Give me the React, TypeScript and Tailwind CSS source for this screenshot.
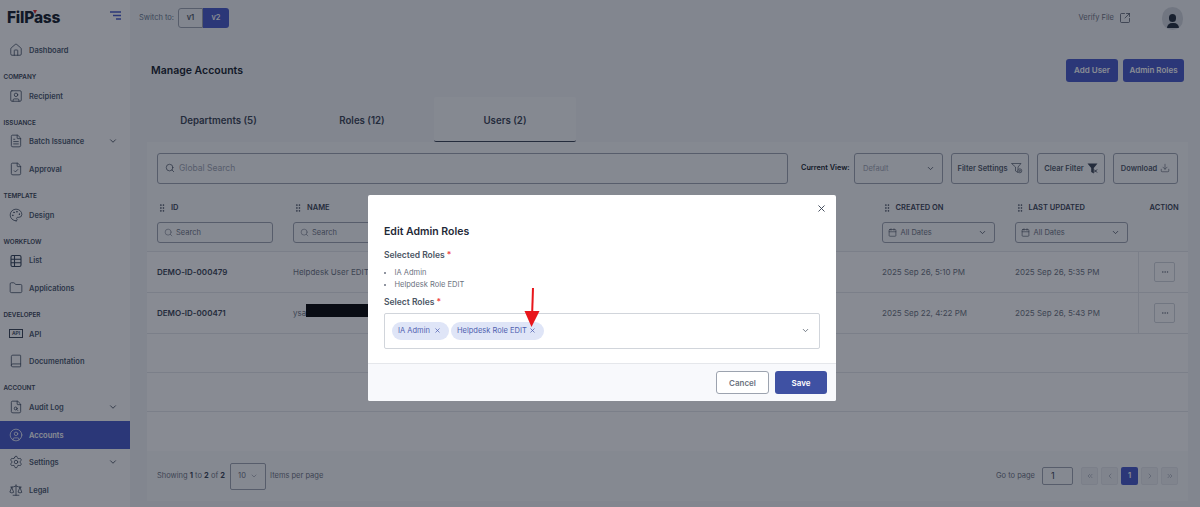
import React from "react";
import { ChevronDown, Search, X, Home, SquareUser, FileText, FileCheck, Palette, Folder, Book, FileSearch, CircleUser, Settings, Scale, SquareArrowOutUpRight, GripVertical, Calendar, Download, ChevronLeft, ChevronRight, ChevronsLeft, ChevronsRight, Ellipsis } from "lucide-react";

const font = { fontFamily: 'Inter, "Liberation Sans", sans-serif' };

function Item({ icon, label, chevron, active }: { icon: React.ReactNode; label: string; chevron?: boolean; active?: boolean }) {
  return (
    <div className={`flex h-[27.6px] shrink-0 items-center pl-[6.5px] pr-[12px] ${active ? "bg-[#4457c8] text-white" : "text-[#475569]"}`}>
      <span className={`flex w-[19px] justify-center ${active ? "text-white" : "text-[#334155]"}`}>{icon}</span>
      <span className="ml-[3.5px] flex-1 pt-[1px] text-[7.5px] font-semibold">{label}</span>
      {chevron && <ChevronDown size={10} strokeWidth={2} className="text-[#374151]" />}
    </div>
  );
}

function Section({ label }: { label: string }) {
  return <div className="flex h-[18.15px] shrink-0 items-end pb-[2px] pl-[3.5px] text-[6.3px] font-semibold leading-[6px] text-[#374151]">{label}</div>;
}

function ListIcon() {
  return (
    <svg width="14" height="14" viewBox="0 0 14 14" fill="none" stroke="currentColor" strokeWidth="1.1">
      <rect x="2" y="1.5" width="10" height="11" rx="1.5" />
      <path d="M2 5.2h10M2 8.8h10M5.5 1.5v11" />
    </svg>
  );
}

function Sidebar() {
  const s = 14;
  const w = 1.3;
  return (
    <aside className="flex h-[507px] w-[130px] shrink-0 flex-col bg-white">
      <div className="flex h-[36.2px] shrink-0 items-center justify-between pl-[7px] pr-[9px]">
        <div className="relative text-[15.5px] font-extrabold tracking-[-0.2px] text-[#111827]">
          FilPass
          <span className="absolute left-[26px] top-[4px] h-0 w-0 border-x-[2.5px] border-t-[4px] border-x-transparent border-t-[#dc2626]" />
        </div>
        <svg width="11" height="9" viewBox="0 0 11 9" className="mt-[-6px]">
          <path d="M0 1h11M3 4.5h8M6 8h5" stroke="#4457c8" strokeWidth="1.3" fill="none" />
        </svg>
      </div>
      <Item icon={<Home size={s} strokeWidth={w} />} label="Dashboard" />
      <Section label="COMPANY" />
      <Item icon={<SquareUser size={s} strokeWidth={w} />} label="Recipient" />
      <Section label="ISSUANCE" />
      <Item icon={<FileText size={s} strokeWidth={w} />} label="Batch Issuance" chevron />
      <Item icon={<FileCheck size={s} strokeWidth={w} />} label="Approval" />
      <Section label="TEMPLATE" />
      <Item icon={<Palette size={s} strokeWidth={w} />} label="Design" />
      <Section label="WORKFLOW" />
      <Item icon={<ListIcon />} label="List" />
      <Item icon={<Folder size={s} strokeWidth={w} />} label="Applications" />
      <Section label="DEVELOPER" />
      <Item icon={<span className="border border-[#374151] px-[1.5px] text-[5px] font-semibold leading-[7px]">API</span>} label="API" />
      <Item icon={<Book size={s} strokeWidth={w} />} label="Documentation" />
      <Section label="ACCOUNT" />
      <Item icon={<FileSearch size={s} strokeWidth={w} />} label="Audit Log" chevron />
      <Item icon={<CircleUser size={s} strokeWidth={w} />} label="Accounts" active />
      <Item icon={<Settings size={s} strokeWidth={w} />} label="Settings" chevron />
      <Item icon={<Scale size={s} strokeWidth={w} />} label="Legal" />
    </aside>
  );
}

function Grip() {
  return <GripVertical size={10} strokeWidth={1.6} className="text-[#374151]" />;
}

function Head({ label }: { label: string }) {
  return (
    <div className="flex h-[14px] items-center gap-[3px] text-[7.5px] font-semibold text-[#374151]">
      <Grip />
      <span className="ml-[1px]">{label}</span>
    </div>
  );
}

function SearchBox() {
  return (
    <div className="flex h-[21px] w-[116px] items-center gap-[3px] rounded-[3px] border border-[#9ca3af] pl-[6px] text-[7.5px] text-[#6b7280]">
      <Search size={9} strokeWidth={1.5} />
      Search
    </div>
  );
}

function DateBox() {
  return (
    <div className="flex h-[21px] w-[113px] items-center rounded-[3px] border border-[#9ca3af] pl-[5px] pr-[7px] text-[7.5px] text-[#6b7280]">
      <Calendar size={9} strokeWidth={1.5} className="mr-[4px] text-[#374151]" />
      <span className="flex-1">All Dates</span>
      <ChevronDown size={9} strokeWidth={2} className="text-[#374151]" />
    </div>
  );
}

function ToolButton({ label, icon, w }: { label: string; icon: React.ReactNode; w: string }) {
  return (
    <div className={`flex h-[31px] shrink-0 items-center justify-center gap-[3px] whitespace-nowrap rounded-[3px] border border-[#9ca3af] text-[7.5px] font-semibold text-[#4b5563] ${w}`}>
      {label}
      {icon}
    </div>
  );
}

function PageBtn({ children, active }: { children: React.ReactNode; active?: boolean }) {
  return (
    <div className={`flex h-[18px] w-[17px] items-center justify-center rounded-[2px] text-[7.5px] font-semibold ${active ? "bg-[#4457c8] text-white" : "border border-[#e5e7eb] bg-[#eef0f3] text-[#9ca3af]"}`}>
      {children}
    </div>
  );
}

function DataRow({ id, name, created, updated }: { id: string; name: React.ReactNode; created: string; updated: string }) {
  return (
    <div className="grid h-[41px] shrink-0 grid-cols-[136px_589px_133px_133px_1fr] items-center border-b border-[#e5e7eb] bg-white pl-[10px] text-[8px] text-[#6b7280]">
      <span className="font-semibold text-[#374151]">{id}</span>
      <span>{name}</span>
      <span>{created}</span>
      <span>{updated}</span>
      <span className="-ml-[10px] flex items-center self-stretch border-l border-[#e5e7eb] pl-[15px]">
        <span className="flex h-[20px] w-[21px] items-center justify-center rounded-[2px] border border-[#d1d5db] text-[#6b7280]">
          <Ellipsis size={8} />
        </span>
      </span>
    </div>
  );
}

function Main() {
  return (
    <main className="flex h-[507px] flex-1 flex-col bg-[#f3f4f6]">
      <header className="flex h-[36px] shrink-0 items-center bg-[#f3f4f6] pl-[9px] pr-[17px]">
        <span className="w-[39px] whitespace-nowrap text-[7.5px] text-[#64748b]">Switch to:</span>
        <div className="flex h-[20px] text-[7.5px] font-semibold">
          <span className="flex w-[25px] items-center justify-center rounded-l-[3px] border border-[#9ca3af] text-[#4b5563]">v1</span>
          <span className="flex w-[26px] items-center justify-center rounded-r-[3px] bg-[#4457c8] text-white">v2</span>
        </div>
        <div className="flex-1" />
        <span className="text-[7.5px] text-[#6b7280]">Verify File</span>
        <SquareArrowOutUpRight size={12} strokeWidth={1.4} className="ml-[5px] text-[#374151]" />
        <span className="ml-[31px] flex h-[23px] w-[21px] flex-col items-center justify-end overflow-hidden rounded-full bg-[#d1d5db] pb-[2px]">
          <span className="h-[8px] w-[7px] rounded-full bg-[#1f2937]" />
          <span className="mt-[1px] h-[5px] w-[12px] rounded-t-full rounded-b-[3px] bg-[#1f2937]" />
        </span>
      </header>

      <div className="flex h-[61px] shrink-0 items-center justify-between pl-[21px] pr-[16px]">
        <h1 className="mt-[9px] text-[10.5px] font-semibold text-[#111827]">Manage Accounts</h1>
        <div className="mt-[7px] flex gap-[5px] text-[8px] font-semibold text-white">
          <span className="flex h-[23px] w-[52px] items-center justify-center rounded-[3px] bg-[#4457c8]">Add User</span>
          <span className="flex h-[23px] w-[61px] items-center justify-center rounded-[3px] bg-[#4457c8]">Admin Roles</span>
        </div>
      </div>

      <div className="flex h-[44.5px] shrink-0 pl-[17px] text-[9.7px] font-semibold text-[#374151]">
        <span className="flex w-[143px] items-center justify-center pt-[5px]">Departments (5)</span>
        <span className="flex w-[144px] items-center justify-center pt-[5px]">Roles (12)</span>
        <span className="flex w-[142px] items-center justify-center rounded-[2px] border-b border-[#374151] bg-[#f9fafb] pt-[5px]">Users (2)</span>
      </div>

      <section className="mb-[6px] ml-[17px] mr-[12px] flex flex-1 flex-col bg-[#f9fafb]">
        <div className="flex h-[53.5px] shrink-0 items-center pl-[10px] pr-[10px]">
          <div className="flex h-[31px] w-[631px] shrink-0 items-center gap-[4px] rounded-[3px] border border-[#9ca3af] pl-[7px] text-[8.5px] text-[#9ca3af]">
            <Search size={10} strokeWidth={1.6} className="text-[#374151]" />
            Global Search
          </div>
          <span className="ml-[13px] shrink-0 whitespace-nowrap text-[7.3px] font-semibold text-[#111827]">Current View:</span>
          <div className="ml-auto flex h-[31px] w-[89px] shrink-0 items-center justify-between rounded-[3px] border border-[#9ca3af] pl-[8px] pr-[7px] text-[7.5px] text-[#9ca3af]">
            Default
            <ChevronDown size={9} strokeWidth={2} className="text-[#374151]" />
          </div>
          <div className="ml-[8px] flex shrink-0 gap-[8px]">
            <ToolButton
              label="Filter Settings"
              w="w-[78px]"
              icon={
                <svg width="12" height="12" viewBox="0 0 12 12" fill="none" stroke="#4b5563" strokeWidth="0.7">
                  <path d="M0.5 1.5h9.5L7 5v5.5L4.5 9V5z" />
                  <circle cx="8.8" cy="8.8" r="2" fill="#f9fafb" />
                  <circle cx="8.8" cy="8.8" r="0.7" />
                </svg>
              }
            />
            <ToolButton
              label="Clear Filter"
              w="w-[68px]"
              icon={
                <svg width="11" height="11" viewBox="0 0 11 11">
                  <path d="M0.5 0.5h10L6.8 5v5.5L4.2 9V5z" fill="#374151" />
                  <path d="M7 6.5l3 3M10 6.5l-3 3" stroke="#374151" strokeWidth="1" />
                </svg>
              }
            />
            <ToolButton label="Download" w="w-[65px]" icon={<Download size={10} strokeWidth={1.4} />} />
          </div>
        </div>

        <div className="grid h-[57px] shrink-0 grid-cols-[136px_588.5px_133px_133px_1fr] border-b border-[#e5e7eb] pl-[10px] pt-[5.5px]">
          <div className="flex flex-col gap-[7.5px]"><Head label="ID" /><SearchBox /></div>
          <div className="flex flex-col gap-[7.5px]"><Head label="NAME" /><SearchBox /></div>
          <div className="flex flex-col gap-[7.5px]"><Head label="CREATED ON" /><DateBox /></div>
          <div className="flex flex-col gap-[7.5px]"><Head label="LAST UPDATED" /><DateBox /></div>
          <div className="ml-[2px] h-[14px] text-[7.5px] font-semibold leading-[14px] text-[#374151]">ACTION</div>
        </div>

        <DataRow id="DEMO-ID-000479" name="Helpdesk User EDIT" created="2025 Sep 26, 5:10 PM" updated="2025 Sep 26, 5:35 PM" />
        <DataRow
          id="DEMO-ID-000471"
          name={<span className="flex items-center">ysa<span className="-mt-[6px] h-[13px] w-[70px] bg-black" /></span>}
          created="2025 Sep 22, 4:22 PM"
          updated="2025 Sep 26, 5:43 PM"
        />
        <div className="h-[39px] shrink-0 border-b border-[#e5e7eb] bg-white" />
        <div className="h-[39px] shrink-0 border-b border-[#e5e7eb] bg-white" />
        <div className="h-[39px] shrink-0 bg-white" />

        <div className="flex flex-1 items-center pl-[10px] pr-[10px] text-[7.5px] text-[#6b7280]">
          <span className="whitespace-nowrap">Showing <b className="text-[#374151]">1</b> to <b className="text-[#374151]">2</b> of <b className="text-[#374151]">2</b></span>
          <div className="ml-[5px] flex h-[27px] w-[36px] items-center justify-center gap-[4px] rounded-[2px] border border-[#9ca3af]">
            10 <ChevronDown size={8} strokeWidth={1.5} />
          </div>
          <span className="ml-[4px]">Items per page</span>
          <div className="flex-1" />
          <span>Go to page</span>
          <div className="ml-[7px] flex h-[18px] w-[31px] items-center rounded-[2px] border border-[#9ca3af] pl-[8px] text-[9px] text-[#374151]">1</div>
          <div className="ml-[8px] flex gap-[3px]">
            <PageBtn><ChevronsLeft size={8} /></PageBtn>
            <PageBtn><ChevronLeft size={8} /></PageBtn>
            <PageBtn active>1</PageBtn>
            <PageBtn><ChevronRight size={8} /></PageBtn>
            <PageBtn><ChevronsRight size={8} /></PageBtn>
          </div>
        </div>
      </section>
    </main>
  );
}

function Chip({ label, w }: { label: string; w: string }) {
  return (
    <span className={`flex h-[18px] shrink-0 items-center justify-between whitespace-nowrap rounded-full bg-[#dfe5f7] pl-[6px] pr-[8px] text-[7.5px] text-[#4f5fb0] ${w}`}>
      {label}
      <X size={7} strokeWidth={2.5} />
    </span>
  );
}

function Modal() {
  return (
    <div className="absolute left-[368px] top-[195px] flex h-[206px] w-[468px] flex-col rounded-[2px] bg-white">
      <div className="relative flex-1 px-[16px]">
        <X size={11} strokeWidth={2} className="absolute right-[9px] top-[8px] text-[#374151]" />
        <h2 className="mt-[28.5px] text-[10.5px] font-semibold leading-[16px] text-[#1f2937]">Edit Admin Roles</h2>
        <p className="mt-[9.5px] text-[8.5px] font-semibold leading-[12px] text-[#4b5563]">Selected Roles <span className="text-[#ef4444]">*</span></p>
        <ul className="mt-[6px] list-disc pl-[10.5px] text-[7.5px] leading-[11.5px] text-[#6b7280]">
          <li>IA Admin</li>
          <li>Helpdesk Role EDIT</li>
        </ul>
        <p className="mt-[5.5px] text-[8.5px] font-semibold leading-[12px] text-[#4b5563]">Select Roles <span className="text-[#ef4444]">*</span></p>
        <div className="mt-[5px] flex h-[36px] w-[436px] items-center gap-[2px] rounded-[2px] border border-[#d1d5db] pl-[7px] pr-[9px]">
          <Chip label="IA Admin" w="w-[57px]" />
          <Chip label="Helpdesk Role EDIT" w="w-[93px]" />
          <div className="flex-1" />
          <ChevronDown size={9} strokeWidth={2} className="text-[#4b5563]" />
        </div>
        <svg width="16" height="40" viewBox="0 0 16 40" className="absolute left-[156px] top-[92.5px]">
          <path d="M9 0L8.2 24" stroke="#e8161b" strokeWidth="2" fill="none" />
          <path d="M0.5 23L15.5 23L7.5 39Z" fill="#e8161b" />
        </svg>
      </div>
      <div className="flex h-[38px] shrink-0 items-center justify-end gap-[6px] rounded-b-[2px] border-t border-[#e5e7eb] bg-[#f8f9fc] pr-[9px]">
        <span className="flex h-[23px] w-[53px] items-center justify-center rounded-[3px] border border-[#9ca3af] bg-white text-[8px] font-semibold text-[#6b7280]">Cancel</span>
        <span className="flex h-[23px] w-[52px] items-center justify-center rounded-[3px] bg-[#3f51a3] text-[8px] font-semibold text-white">Save</span>
      </div>
    </div>
  );
}

export default function App() {
  return (
    <div className="relative flex h-[507px] w-[1200px] overflow-hidden" style={font}>
      <Sidebar />
      <Main />
      <div className="absolute inset-0 bg-[#111827]/50" />
      <Modal />
    </div>
  );
}
